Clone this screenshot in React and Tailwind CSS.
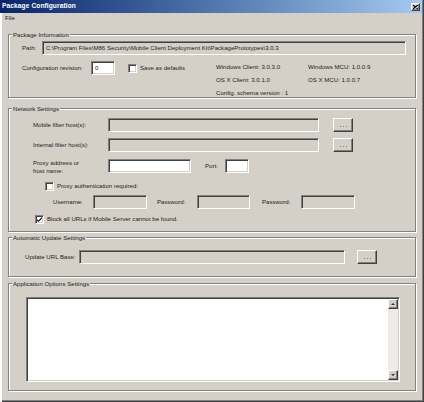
import React from "react";

const sunken =
  "box-border border border-t-[#808080] border-l-[#808080] border-b-white border-r-white shadow-[inset_1px_1px_0_#404040,inset_-1px_-1px_0_#d4d0c8]";
const raised =
  "box-border border border-t-white border-l-white border-b-[#404040] border-r-[#404040] shadow-[inset_-1px_-1px_0_#808080] bg-[#d4d0c8]";

function Group({ label, className, children }) {
  return (
    <div
      className={`relative box-border border border-[#808080] shadow-[inset_1px_1px_0_#fff,1px_1px_0_#fff] ${className}`}
    >
      <span className="absolute left-[3px] top-[-4px] px-[1px] bg-[#d4d0c8] leading-[7px] whitespace-nowrap">
        {label}
      </span>
      {children}
    </div>
  );
}

function Dots() {
  return (
    <div className={`${raised} w-[20px] h-[14px] flex items-end justify-center pb-[4px]`}>
      <svg width="7" height="1" viewBox="0 0 7 1">
        <rect x="0" y="0" width="1" height="1" fill="#808080" />
        <rect x="3" y="0" width="1" height="1" fill="#808080" />
        <rect x="6" y="0" width="1" height="1" fill="#808080" />
      </svg>
    </div>
  );
}

function Check({ checked }) {
  return (
    <div className={`${sunken} w-[9px] h-[9px] bg-white flex items-center justify-center shrink-0`}>
      {checked && (
        <svg width="5" height="5" viewBox="0 0 7 7">
          <path d="M0 3 L2 5 L7 0 L7 2 L2 7 L0 5 Z" fill="#000" />
        </svg>
      )}
    </div>
  );
}

export default function App() {
  return (
    <div className="w-[424px] h-[402px] overflow-hidden bg-[#d4d0c8] text-[#1c1c1c] text-[6.1px] font-['Liberation_Sans',Arial,sans-serif] flex flex-col shadow-[inset_2px_0_0_#fff,inset_-1px_-1px_0_#404040,inset_-2px_-2px_0_#808080]">
      {/* Title bar */}
      <div className="h-[13px] shrink-0 mr-[2px] bg-gradient-to-r from-[#0a246a] to-[#a6caf0] flex items-center justify-between pl-[2px] pr-[2px]">
        <span className="text-white font-bold text-[6.6px] leading-none tracking-[0.1px]">
          Package Configuration
        </span>
        <div className={`${raised} w-[9px] h-[8px] flex items-center justify-center`}>
          <svg width="5" height="4" viewBox="0 0 5 4">
            <path d="M0 0 L5 4 M5 0 L0 4" stroke="#000" strokeWidth="1.1" />
          </svg>
        </div>
      </div>
      {/* Menu */}
      <div className="h-[11px] shrink-0 flex items-center pl-[5px]">
        <span className="leading-none">File</span>
      </div>

      <div className="flex flex-col px-[8px]">
        {/* Package Information */}
        <Group label="Package Information" className="mt-[10px] h-[64px]">
          <div className="flex flex-col pt-[6px] pl-[13px] pr-[9px]">
            <div className="flex items-center h-[14px]">
              <span className="w-[20px] shrink-0">Path:</span>
              <div className={`${sunken} flex-1 h-[14px] bg-[#d4d0c8] flex items-center pl-[3px] whitespace-nowrap overflow-hidden`}>
                C:\Program Files\M86 Security\Mobile Client Deployment Kit\PackagePrototypes\3.0.3
              </div>
            </div>
            <div className="flex items-start mt-[5px]">
              <div className="w-[194px] h-[16px] flex items-center shrink-0">
                <span className="w-[69px] shrink-0">Configuration revision:</span>
                <div className={`${sunken} w-[24px] h-[14px] bg-white flex items-center pl-[3px]`}>0</div>
                <div className="ml-[13px]">
                  <Check />
                </div>
                <span className="ml-[3px]">Save as defaults</span>
              </div>
              <div className="grid grid-cols-[92px_auto] leading-[13px] whitespace-nowrap">
                <span>Windows Client: 3.0.3.0</span>
                <span>Windows MCU: 1.0.0.9</span>
                <span>OS X Client: 3.0.1.0</span>
                <span>OS X MCU: 1.0.0.7</span>
                <span>Config. schema version : 1</span>
              </div>
            </div>
          </div>
        </Group>

        {/* Network Settings */}
        <Group label="Network Settings" className="mt-[10px] h-[124px]">
          <div className="flex flex-col pt-[9px] pl-[24px]">
            <div className="flex items-center h-[14px]">
              <span className="w-[75px] shrink-0">Mobile filter host(s):</span>
              <div className={`${sunken} w-[211px] h-[14px] bg-[#d4d0c8]`} />
              <div className="ml-[14px]">
                <Dots />
              </div>
            </div>
            <div className="flex items-center h-[14px] mt-[6px]">
              <span className="w-[75px] shrink-0">Internal filter host(s):</span>
              <div className={`${sunken} w-[211px] h-[14px] bg-[#d4d0c8]`} />
              <div className="ml-[14px]">
                <Dots />
              </div>
            </div>
            <div className="flex items-center h-[14px] mt-[7px]">
              <span className="w-[75px] shrink-0 leading-[8px] pt-[1px]">
                Proxy address or
                <br />
                host name:
              </span>
              <div className={`${sunken} w-[83px] h-[14px] bg-white`} />
              <span className="ml-[14px] w-[20px]">Port:</span>
              <div className={`${sunken} w-[24px] h-[14px] bg-white`} />
            </div>
            <div className="flex items-center h-[14px] mt-[6px] pl-[12px]">
              <Check />
              <span className="ml-[3px]">Proxy authentication required:</span>
            </div>
            <div className="flex items-center h-[14px] mt-[2px] pl-[20px]">
              <span className="w-[40px] shrink-0">Username:</span>
              <div className={`${sunken} w-[54px] h-[14px] bg-[#d4d0c8]`} />
              <span className="ml-[10px] w-[40px] shrink-0">Password:</span>
              <div className={`${sunken} w-[53px] h-[14px] bg-[#d4d0c8]`} />
              <span className="ml-[12px] w-[39px] shrink-0">Password:</span>
              <div className={`${sunken} w-[54px] h-[14px] bg-[#d4d0c8]`} />
            </div>
            <div className="flex items-center h-[14px] mt-[3px] pl-[2px]">
              <Check checked />
              <span className="ml-[3px]">Block all URLs if Mobile Server cannot be found.</span>
            </div>
          </div>
        </Group>

        {/* Automatic Update Settings */}
        <Group label="Automatic Update Settings" className="mt-[5px] h-[40px]">
          <div className="flex items-center h-[14px] mt-[12px] pl-[16px]">
            <span className="w-[54px] shrink-0">Update URL Base:</span>
            <div className={`${sunken} w-[266px] h-[14px] bg-[#d4d0c8]`} />
            <div className="ml-[12px]">
              <Dots />
            </div>
          </div>
        </Group>

        {/* Application Options Settings */}
        <Group label="Application Options Settings" className="mt-[6px] h-[108px]">
          <div className="pt-[13px] pl-[17px]">
            <div className={`${sunken} w-[374px] h-[85px] bg-white flex p-[1px]`}>
              <div className="flex-1" />
              <div className="w-[10px] flex flex-col">
                <div className={`${raised} h-[10px] flex items-center justify-center`}>
                  <svg width="4" height="2" viewBox="0 0 4 2">
                    <path d="M2 0 L4 2 L0 2 Z" fill="#333" />
                  </svg>
                </div>
                <div className="flex-1 bg-[#ecebe5]" />
                <div className={`${raised} h-[10px] flex items-center justify-center`}>
                  <svg width="4" height="2" viewBox="0 0 4 2">
                    <path d="M0 0 L4 0 L2 2 Z" fill="#333" />
                  </svg>
                </div>
              </div>
            </div>
          </div>
        </Group>
      </div>
    </div>
  );
}
